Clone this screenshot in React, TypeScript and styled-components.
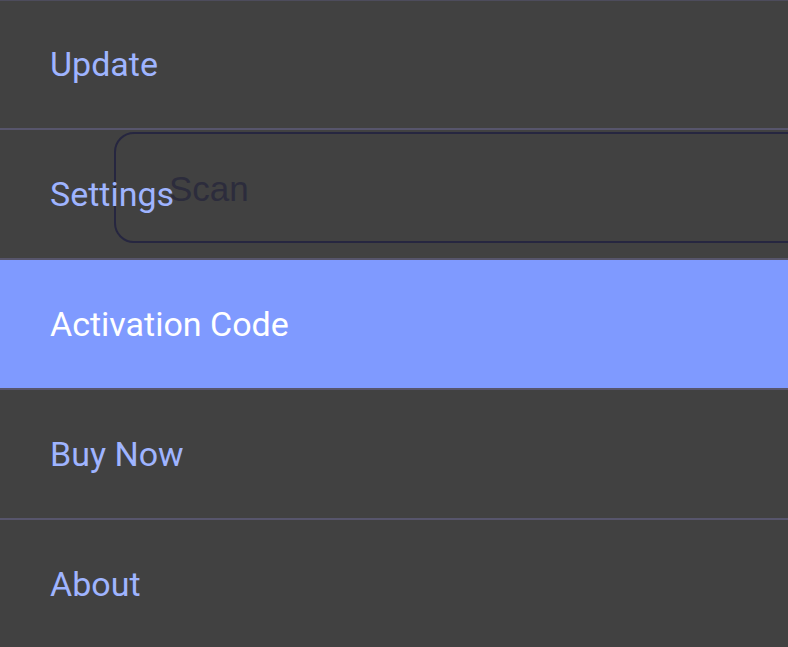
import * as React from "react";
import styled, { createGlobalStyle } from "styled-components";

const GlobalStyle = createGlobalStyle`
  html, body {
    margin: 0;
    padding: 0;
    background: #414141;
    overflow: hidden;
  }
`;

const items = ["Update", "Settings", "Activation Code", "Buy Now", "About"];

const App: React.FC = () => {
  return (
    <>
      <GlobalStyle />
      <MenuWrapper>
        {items.map((label) => (
          <MenuRow key={label} active={label === "Activation Code"}>
            <MenuLabel active={label === "Activation Code"}>{label}</MenuLabel>
          </MenuRow>
        ))}
        <ScanBox>
          <ScanText>Scan</ScanText>
        </ScanBox>
      </MenuWrapper>
    </>
  );
};

export default App;

const MenuWrapper = styled.div`
  position: relative;
  display: flex;
  flex-direction: column;
  width: 788px;
  height: 647px;
  overflow: hidden;
  box-sizing: border-box;
  background: #414141;
  box-shadow: inset 0 1px 0 #4d4c5c;
`;

const MenuRow = styled.div<{ active?: boolean }>`
  display: flex;
  flex-direction: row;
  align-items: center;
  flex: 0 0 128px;
  padding-left: 50px;
  background: ${(p) => (p.active ? "#7f9aff" : "transparent")};
  border-bottom: 2px solid #57556c;
`;

const MenuLabel = styled.span<{ active?: boolean }>`
  position: relative;
  z-index: 2;
  font-family: Roboto, "Liberation Sans", sans-serif;
  font-size: 34px;
  color: ${(p) => (p.active ? "#ffffff" : "#9fb4ff")};
`;

const ScanBox = styled.div`
  position: absolute;
  z-index: 1;
  left: 114px;
  top: 132px;
  width: 700px;
  height: 105px;
  border: 2px solid #262640;
  border-radius: 20px;
  display: flex;
  align-items: center;
  padding-left: 53px;
  padding-top: 2px;
  box-sizing: content-box;
`;

const ScanText = styled.span`
  font-family: "Liberation Sans", Arial, sans-serif;
  font-size: 35px;
  color: #2c2c3c;
`;
